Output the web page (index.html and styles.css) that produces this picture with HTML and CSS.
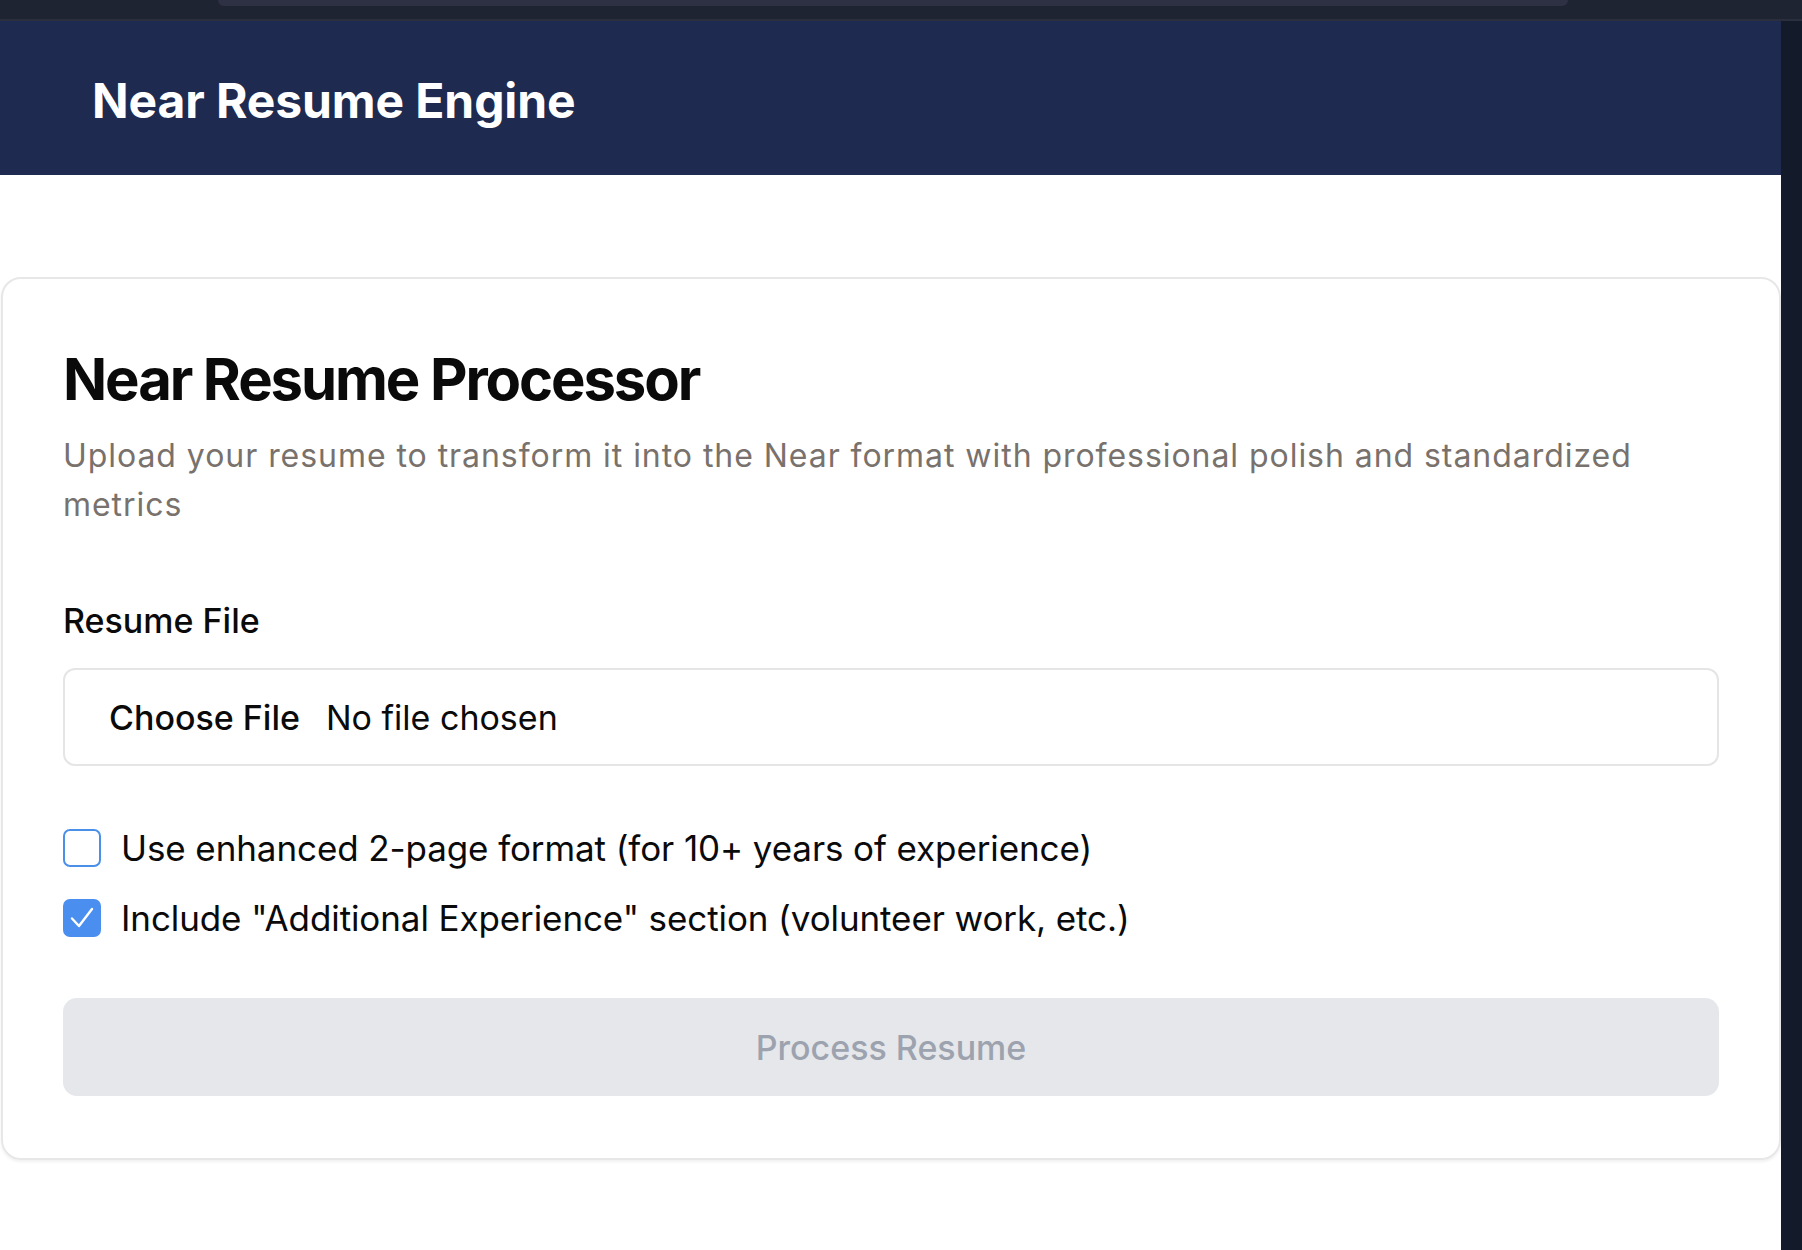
FILE: index.html
```html
<!DOCTYPE html>
<html lang="en">
<head>
<meta charset="utf-8">
<title>Near Resume Engine</title>
<link rel="stylesheet" href="styles.css">
</head>
<body>
<div class="window">
  <div class="chrome"><div class="chrome-bar"></div></div>
  <div class="frame">
    <div class="page">
      <header class="topbar">
        <h1 class="brand">Near Resume Engine</h1>
      </header>
      <main class="main">
        <section class="card">
          <h2 class="card-title">Near Resume Processor</h2>
          <p class="card-desc">Upload your resume to transform it into the Near format with professional polish and standardized metrics</p>
          <label class="field-label">Resume File</label>
          <div class="file-input">
            <span class="file-btn">Choose File</span>
            <span class="file-name">No file chosen</span>
          </div>
          <div class="options">
            <label class="option">
              <span class="box"></span>
              <span>Use enhanced 2-page format (for 10+ years of experience)</span>
            </label>
            <label class="option">
              <span class="box checked">
                <svg viewBox="0 0 38 38" width="38" height="38"><path d="M9 19.5 L16 27 L29 10" fill="none" stroke="#fff" stroke-width="2.4" stroke-linecap="round" stroke-linejoin="round"/></svg>
              </span>
              <span>Include "Additional Experience" section (volunteer work, etc.)</span>
            </label>
          </div>
          <button class="submit" type="button">Process Resume</button>
        </section>
      </main>
    </div>
    <div class="edge"></div>
  </div>
</div>
</body>
</html>
```
FILE: styles.css
```css
* { box-sizing: border-box; }
html, body { margin: 0; padding: 0; }
body {
  width: 1802px;
  height: 1250px;
  overflow: hidden;
  font-family: Inter, "Noto Sans", "Liberation Sans", sans-serif;
  background: #ffffff;
  color: #111111;
}
.window { display: flex; flex-direction: column; height: 1250px; }
.chrome {
  height: 21px;
  background: #1f2433;
  border-bottom: 2px solid #2b2f3d;
  display: flex;
  padding-left: 218px;
  padding-right: 234px;
}
.chrome-bar {
  flex: 1;
  height: 6px;
  background: #2d3143;
  border-radius: 0 0 8px 8px;
}
.frame { flex: 1; display: flex; }
.page { flex: 1; display: flex; flex-direction: column; background: #fff; }
.edge { width: 21px; background: #131a2a; }
.topbar {
  height: 154px;
  background: #1e2a4f;
  display: flex;
  align-items: center;
  padding-left: 92px;
  padding-top: 6px;
}
.brand {
  margin: 0;
  color: #ffffff;
  font-size: 48px;
  font-weight: 700;
  letter-spacing: -0.1px;
  line-height: 64px;
}
.main { padding-top: 102px; }
.card {
  margin-left: 1px;
  border: 2px solid #e7e7e7;
  border-radius: 20px;
  padding: 64px 60px 62px;
  box-shadow: 0 2px 3px rgba(0,0,0,0.06);
  display: flex;
  flex-direction: column;
}
.card-title {
  margin: 0;
  font-size: 58px;
  line-height: 72px;
  font-weight: 700;
  letter-spacing: -2.1px;
  color: #0a0a0a;
}
.card-desc {
  margin: 16px 0 0;
  font-size: 32px;
  line-height: 49px;
  letter-spacing: 0.95px;
  color: #78716c;
}
.field-label {
  margin-top: 68px;
  font-size: 34px;
  line-height: 48px;
  font-weight: 500;
  color: #0a0a0a;
}
.file-input {
  margin-top: 23px;
  height: 98px;
  border: 2px solid #e5e5e5;
  border-radius: 12px;
  display: flex;
  align-items: center;
  padding-left: 44px;
  font-size: 34px;
  gap: 26px;
}
.file-btn { font-weight: 500; color: #0a0a0a; }
.file-name { color: #0a0a0a; }
.options {
  margin-top: 58px;
  display: flex;
  flex-direction: column;
  gap: 22px;
}
.option {
  display: flex;
  align-items: center;
  gap: 20px;
  font-size: 35px;
  line-height: 48px;
  letter-spacing: -0.1px;
  color: #0a0a0a;
}
.box {
  width: 38px;
  height: 38px;
  border: 2px solid #4a90e8;
  border-radius: 7px;
  background: #fff;
  flex: none;
  display: flex;
}
.box.checked { background: #4a8ff0; border-color: #4a8ff0; }
.box.checked svg { margin: -2px; }
.submit {
  margin-top: 56px;
  height: 98px;
  border: none;
  border-radius: 14px;
  background: #e5e7eb;
  color: #9ca3af;
  font-family: inherit;
  font-size: 34px;
  font-weight: 500;
}
```
